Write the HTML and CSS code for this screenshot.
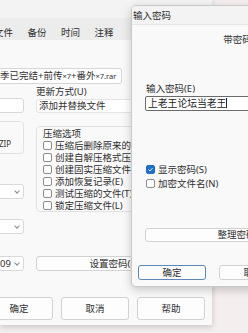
FILE: index.html
```
<!DOCTYPE html>
<html lang="zh-CN">
<head>
    <meta charset="UTF-8">
    <title>压缩文件名和参数</title>
    <link rel="stylesheet" href="styles.css">
</head>
<body>
    <div class="main">
        <div class="titlebar"></div>
        <div class="tabs">
            <span>文件</span>
            <span>备份</span>
            <span>时间</span>
            <span>注释</span>
        </div>

        <div class="content">
            <div class="namefield">季已完结+前传<span class="sm">×7</span>+番外<span class="sm">×7.rar</span></div>

            <div class="cols">
                <div class="left-col">
                    <div class="field box1"></div>
                    <div class="formatbox">ZIP</div>
                    <div class="field select sel1"><span class="chev"></span></div>
                    <div class="field select sel2"><span class="chev"></span></div>
                    <div class="field select sel3">09<span class="chev"></span></div>
                </div>

                <div class="right-col">
                    <div class="label">更新方式(U)</div>
                    <div class="field select update">添加并替换文件</div>
                    <div class="group">
                        <div class="group-title">压缩选项</div>
                        <div class="check"><span class="box"></span>压缩后删除原来的文件(D)</div>
                        <div class="check"><span class="box"></span>创建自解压格式压缩文件(X)</div>
                        <div class="check"><span class="box"></span>创建固实压缩文件(S)</div>
                        <div class="check"><span class="box"></span>添加恢复记录(E)</div>
                        <div class="check"><span class="box"></span>测试压缩的文件(T)</div>
                        <div class="check"><span class="box"></span>锁定压缩文件(L)</div>
                    </div>
                    <div class="btn setpw">设置密码(P)...</div>
                </div>
            </div>

            <div class="bottom-btns">
                <div class="btn">确定</div>
                <div class="btn">取消</div>
                <div class="btn">帮助</div>
            </div>
        </div>
    </div>

    <div class="dialog">
        <div class="dlg-title">输入密码</div>
        <div class="dlg-body">
            <div class="dlg-head">带密码压缩</div>
            <div class="dlg-label">输入密码(E)</div>
            <div class="pw-input">上老王论坛当老王<span class="caret"></span></div>
            <div class="check dlg-check first"><span class="box checked"><svg width="9" height="9" viewBox="0 0 9 9"><path d="M2 4.6 L3.8 6.3 L7 2.8" fill="none" stroke="#fff" stroke-width="1.2"/></svg></span>显示密码(S)</div>
            <div class="check dlg-check"><span class="box"></span>加密文件名(N)</div>
            <div class="btn organize">整理密码(O)...</div>
            <div class="dlg-btns">
                <div class="btn default">确定</div>
                <div class="btn">取消</div>
            </div>
        </div>
    </div>
</body>
</html>
```
FILE: styles.css
```
* {
    box-sizing: border-box;
}

body {
    margin: 0;
    width: 248px;
    height: 333px;
    overflow: hidden;
    background-color: #f4eeee;
    font-family: "Noto Sans", "Noto Sans CJK SC", sans-serif;
    font-size: 9.5px;
    color: #303030;
    position: relative;
}

.main {
    width: 212px;
    height: 325px;
    overflow: hidden;
    background-color: #f9f9f9;
    box-shadow: 0 2px 6px rgba(0, 0, 0, 0.18);
}

.titlebar {
    height: 18px;
    background-color: #f3f3f3;
}

.tabs {
    height: 22px;
    background-color: #ececec;
    display: flex;
    gap: 14.5px;
    margin-left: -6px;
    padding-top: 9px;
    line-height: 12px;
}

.content {
    margin-left: -30px;
    padding-top: 28px;
}

.namefield {
    width: 152px;
    height: 16px;
    line-height: 14px;
    padding-left: 29px;
    background-color: #fff;
    border: 1px solid #d6d6d6;
    border-radius: 3px;
    white-space: nowrap;
    overflow: hidden;
}

.namefield .sm {
    font-size: 7.5px;
}

.cols {
    display: grid;
    grid-template-columns: 54px 164px;
    column-gap: 12px;
    margin-top: 2px;
}

.field {
    background-color: #fff;
    border: 1px solid #d8d8d8;
    border-radius: 3px;
    position: relative;
    line-height: 13px;
}

.box1 {
    margin-top: 12px;
    height: 15px;
}

.formatbox {
    margin-top: 8px;
    height: 33px;
    padding-top: 16px;
    padding-left: 29px;
    line-height: 12px;
    border: 1px solid #e2e2e2;
    border-left: none;
    border-radius: 0 4px 4px 0;
    font-size: 8px;
}

.select {
    height: 15px;
}

.sel1 {
    margin-top: 30px;
}

.sel2 {
    margin-top: 20px;
}

.sel3 {
    margin-top: 22px;
    padding-left: 29px;
}

.chev {
    position: absolute;
    right: 4px;
    top: 4px;
    width: 4px;
    height: 4px;
    border-right: 1px solid #8a8a8a;
    border-bottom: 1px solid #8a8a8a;
    transform: rotate(45deg);
}

.label {
    height: 12px;
    line-height: 12px;
}

.update {
    margin-top: 1px;
    height: 14px;
    padding-left: 2px;
    line-height: 12px;
    border-color: #e4e4e4;
}

.group {
    margin-top: 13px;
    height: 86px;
    padding: 1px 0 0 6px;
    border: 1px solid #e2e2e2;
    border-radius: 4px;
    white-space: nowrap;
    overflow: hidden;
}

.group-title {
    height: 11px;
    line-height: 11px;
}

.check {
    display: flex;
    align-items: center;
    height: 12px;
    white-space: nowrap;
}

.box {
    width: 9px;
    height: 9px;
    border: 1px solid #8c8c8c;
    border-radius: 2px;
    background-color: #fff;
    margin-right: 3px;
    flex-shrink: 0;
}

.box.checked {
    background-color: #1f6fc4;
    border-color: #1f6fc4;
    display: flex;
    align-items: center;
    justify-content: center;
}

.btn {
    background-color: #fdfdfd;
    border: 1px solid #d2d2d2;
    border-radius: 3px;
    text-align: center;
    white-space: nowrap;
}

.setpw {
    margin-top: 44px;
    width: 164px;
    height: 15px;
    line-height: 13px;
}

.bottom-btns {
    display: flex;
    gap: 8px;
    margin-top: 26px;
    padding-left: 15px;
}

.bottom-btns .btn {
    width: 68px;
    height: 23px;
    line-height: 21px;
}

.dialog {
    position: absolute;
    left: 131px;
    top: 5px;
    width: 232px;
    height: 282px;
    border: 1px solid #c9c9c9;
    border-radius: 5px;
    background-color: #f9f9f9;
    box-shadow: 0 3px 10px rgba(0, 0, 0, 0.2);
    overflow: hidden;
}

.dlg-title {
    height: 19px;
    line-height: 19px;
    padding-left: 1px;
    background-color: #f3f3f3;
    border-bottom: 1px solid #e4e4e4;
}

.dlg-body {
    padding: 0 13px;
}

.dlg-head {
    margin-top: 9px;
    line-height: 12px;
    text-align: center;
}

.dlg-label {
    margin-top: 37px;
    line-height: 12px;
    padding-left: 1px;
}

.pw-input {
    margin-top: 1px;
    height: 15px;
    line-height: 13px;
    padding-left: 2px;
    background-color: #fff;
    border: 1px solid #6b6b6b;
    border-radius: 2px;
    font-size: 9.8px;
    color: #1c1c1c;
}

.caret {
    display: inline-block;
    width: 1px;
    height: 10px;
    background-color: #222;
    vertical-align: -1px;
}

.dlg-check {
    padding-left: 1px;
    margin-top: 2px;
}

.dlg-check.first {
    margin-top: 52px;
}

.organize {
    margin-top: 39px;
    height: 14px;
    line-height: 12px;
}

.dlg-btns {
    display: flex;
    gap: 13px;
    margin-top: 23px;
    margin-left: -7px;
}

.dlg-btns .btn {
    width: 68px;
    height: 15px;
    line-height: 13px;
}

.dlg-btns .default {
    border-color: #5a87b5;
}
```
